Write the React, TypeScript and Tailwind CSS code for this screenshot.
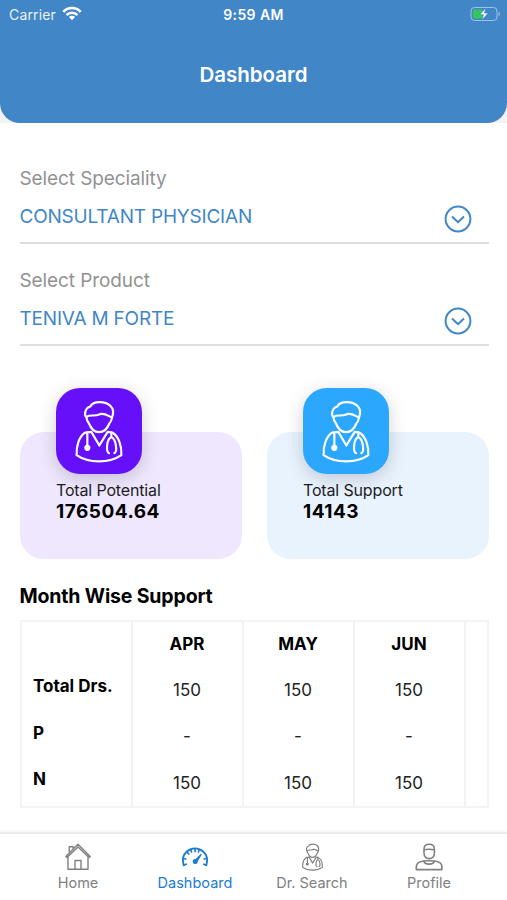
import React from 'react';

interface SelectProps {
  label: string;
  value: string;
}

interface StatProps {
  title: string;
  value: string;
  cardClass: string;
  tileClass: string;
}

const MONTHS = [
  { name: 'APR', values: ['150', '-', '150'] },
  { name: 'MAY', values: ['150', '-', '150'] },
  { name: 'JUN', values: ['150', '-', '150'] },
];

const DoctorIcon = ({ className, stroke }: { className: string; stroke: number }) => (
  <svg viewBox="58 36 144 188" className={className} fill="none" stroke="currentColor" strokeWidth={stroke} strokeLinecap="round" strokeLinejoin="round">
    <path d="M92 86C86 82 86 60 104 55C112 38 148 38 164 53C176 65 174 76 169 88" />
    <path d="M92 86C93 97 96 101 100 106C105 119 115 132 130 132C145 132 156 119 161 106C166 101 168 97 169 88C157 84 150 74 133 78C115 86 106 78 92 86Z" />
    <path d="M107 131C100 131 92 131 86 135C71 146 61 174 63 201C99 226 161 226 197 201C199 174 188 146 174 136C169 131 162 131 156 131L131 172Z" />
    <path d="M95 134V172" />
    <circle cx="95" cy="179" r="6" fill="currentColor" />
    <path d="M167 134V147M160 195C150 191 153 151 167 147C181 151 186 191 176 195" />
  </svg>
);

const HomeIcon = () => (
  <svg viewBox="0 0 28 28" className="h-7 w-7" fill="none" stroke="currentColor" strokeWidth="1.4" strokeLinejoin="round" strokeLinecap="round">
    <path d="M1.8 13.4L14 1.2L26.2 13.4L25 14.6L14 4L3 14.6Z" />
    <path d="M4 14.5V26.3H24V14.5M11 26V17.5H17V26M5.2 9V3.8H9.2V5.5" />
  </svg>
);

const GaugeIcon = () => (
  <svg viewBox="0 0 28 28" className="h-7 w-7" fill="none" stroke="currentColor" strokeWidth="1.9" strokeLinecap="round">
    <path d="M2.7 22.3C.8 17 2.2 11.5 5.6 8.7C10.3 4.3 17.7 4.3 22.4 8.7C25.8 11.5 27.2 17 25.3 22.3" />
    <path d="M2.7 22.2L5.2 21.2M2.3 15.5L4.8 16M6 9L7.8 11M14 5.8V8.6M9.7 6.6L10.6 9M18.3 6.6L17.4 9M25.7 15.5L23.2 16M25.3 22.2L22.8 21.2" strokeWidth="1.7" />
    <path d="M13.5 18L20.3 11.2L15.6 19Z" fill="currentColor" strokeWidth="1.2" />
    <circle cx="14.2" cy="18.4" r="1.9" fill="currentColor" strokeWidth="1.2" />
  </svg>
);

const ProfileIcon = () => (
  <svg viewBox="0 0 28 28" className="h-7 w-7" fill="none" stroke="currentColor" strokeWidth="1.6" strokeLinejoin="round">
    <path d="M9 6.2C9 2.6 10.8 1.3 14.2 1.3S19.4 2.6 19.4 6.2V10C19.4 13.4 17.2 15.6 14.2 15.6S9 13.4 9 10Z" />
    <path d="M9 6.8C12 6.2 16.4 6.2 19.4 6.8" />
    <path d="M1.3 26.6V23.5C1.3 20 4 18.6 9 18C12 17.7 16.5 17.7 19.2 18C24 18.6 26.9 20 26.9 23.5V26.6Z" />
    <path d="M8.8 18C9.6 22.2 18.6 22.2 19.4 18" />
  </svg>
);

const StatusBar = () => (
  <div className="flex h-7 items-center justify-between pl-[9px] pr-[6px] text-white">
    <div className="flex w-24 items-center gap-[6px]">
      <span className="text-[14px] tracking-[0.15px] opacity-90">Carrier</span>
      <svg viewBox="0 0 20 15" className="mb-[2px] h-[15px] w-5" fill="none" stroke="currentColor" strokeWidth="2.5">
        <path d="M1.3 5.8C6.2 .8 13.8 .8 18.7 5.8" />
        <path d="M4.5 9C7.7 6 12.3 6 15.5 9" />
        <path d="M10 14.2L6.9 11.1C8.7 9.4 11.3 9.4 13.1 11.1Z" fill="currentColor" stroke="none" />
      </svg>
    </div>
    <span className="-ml-[3px] text-[14px] font-semibold tracking-[0.4px]">9:59 AM</span>
    <div className="flex w-24 justify-end">
      <svg viewBox="0 0 31 16" className="mb-px h-4 w-[31px]">
        <rect x="1" y="1.5" width="26" height="13" rx="3.5" fill="none" stroke="#a0c3e5" strokeWidth="1" />
        <path d="M28.5 5.5C30.6 6.4 30.6 9.6 28.5 10.5Z" fill="#8db6df" />
        <rect x="3" y="3.5" width="10" height="9" rx="1.5" fill="#34c759" />
        <path d="M15.8 2L9.8 8.7H13.4L12 14L18.2 7.1H14.5Z" fill="#fff" stroke="#4186c7" strokeWidth="0.7" />
      </svg>
    </div>
  </div>
);

const SelectField: React.FC<SelectProps> = ({ label, value }) => {
  return (
    <div className="flex h-[102px] flex-col border-b-2 border-[#dedede] pt-[25px]">
      <span className="text-[19px] leading-6 tracking-[-0.1px] text-[#929292]">{label}</span>
      <div className="mt-3 flex items-center justify-between pr-[17px] text-[#4186c7]">
        <span className="pb-1 text-[19px] leading-7 tracking-[-0.2px]">{value}</span>
        <svg viewBox="0 0 28 28" className="h-7 w-7" fill="none" stroke="currentColor" strokeWidth="2">
          <circle cx="14" cy="14" r="12.4" />
          <path d="M8 11.5L14 17.2L20 11.5" />
        </svg>
      </div>
    </div>
  );
};

const StatCard: React.FC<StatProps> = ({ title, value, cardClass, tileClass }) => {
  return (
    <div className={`h-[127px] flex-1 rounded-[24px] pl-[36.5px] ${cardClass}`}>
      <div className={`-mt-[44px] flex h-[86px] w-[86px] items-center justify-center rounded-[24px] text-white shadow-[0_4px_18px_rgba(0,0,0,0.18)] ${tileClass}`}>
        <DoctorIcon className="h-[63px] w-12" stroke={6.5} />
      </div>
      <div className="mt-[6px] text-[16px] leading-[21px] tracking-[-0.15px] text-[#1c1c1e]">{title}</div>
      <div className="text-[19px] font-bold leading-[21px] tracking-[0.5px] text-black">{value}</div>
    </div>
  );
};

const TabItem = ({ label, active, children }: { label: string; active?: boolean; children: React.ReactNode }) => (
  <div className={`flex w-[117px] flex-col items-center ${active ? 'text-[#1b7cd0]' : 'text-[#808080]'}`}>
    <div className="flex h-7 items-center">{children}</div>
    <span className="mt-[2px] text-[14.5px] leading-5">{label}</span>
  </div>
);

const App = () => {
  return (
    <div className="flex h-[900px] w-[507px] flex-col overflow-hidden bg-white font-['Inter','Liberation_Sans',sans-serif]">
      <div className="bg-[#f2f2f4]">
        <header className="h-[123px] rounded-b-[20px] bg-[#4186c7]">
          <StatusBar />
          <h1 className="mt-[33px] text-center text-[20.5px] font-semibold leading-7 text-white">Dashboard</h1>
        </header>
      </div>

      <main className="flex-1 pl-[19.5px] pr-[18.5px] pt-[19px]">
        <SelectField label="Select Speciality" value="CONSULTANT PHYSICIAN" />
        <SelectField label="Select Product" value="TENIVA M FORTE" />

        {/* Totals */}
        <div className="mt-[86px] flex gap-[25px]">
          <StatCard title="Total Potential" value="176504.64" cardClass="bg-[#efe7fd]" tileClass="bg-[#6610fa]" />
          <StatCard title="Total Support" value="14143" cardClass="bg-[#e8f3fe]" tileClass="bg-[#2ba8fd]" />
        </div>

        <h2 className="mt-[25px] text-[19.5px] font-bold leading-6 tracking-[-0.15px] text-black">Month Wise Support</h2>

        <div className="mt-3 flex h-[188px] overflow-hidden border-2 border-[#f3f3f3] text-[17px]">
          <div className="flex w-[111px] shrink-0 flex-col border-r-2 border-[#f3f3f3] pl-[11.5px] pt-[41px] text-[17px] font-bold text-black">
            <span className="h-[46.5px] leading-[46px]">Total Drs.</span>
            <span className="h-[46.5px] leading-[46px]">P</span>
            <span className="h-[46.5px] leading-[46px]">N</span>
          </div>
          {MONTHS.map((month) => (
            <div key={month.name} className="flex w-[111px] shrink-0 flex-col items-center border-r-2 border-[#f3f3f3] text-[#222]">
              <span className="h-[45px] font-bold leading-[45px] text-black">{month.name}</span>
              {month.values.map((v, i) => (
                <span key={i} className="h-[46.5px] leading-[46px]">{v}</span>
              ))}
            </div>
          ))}
        </div>
      </main>

      <nav className="flex h-[68px] justify-center border-t-2 border-[#ebebeb] bg-white pt-[9px] shadow-[0_-1px_2px_rgba(0,0,0,0.05)]">
        <TabItem label="Home"><HomeIcon /></TabItem>
        <TabItem label="Dashboard" active><GaugeIcon /></TabItem>
        <TabItem label="Dr. Search"><DoctorIcon className="h-7 w-[21px]" stroke={8} /></TabItem>
        <TabItem label="Profile"><ProfileIcon /></TabItem>
      </nav>
    </div>
  );
};

export default App;
